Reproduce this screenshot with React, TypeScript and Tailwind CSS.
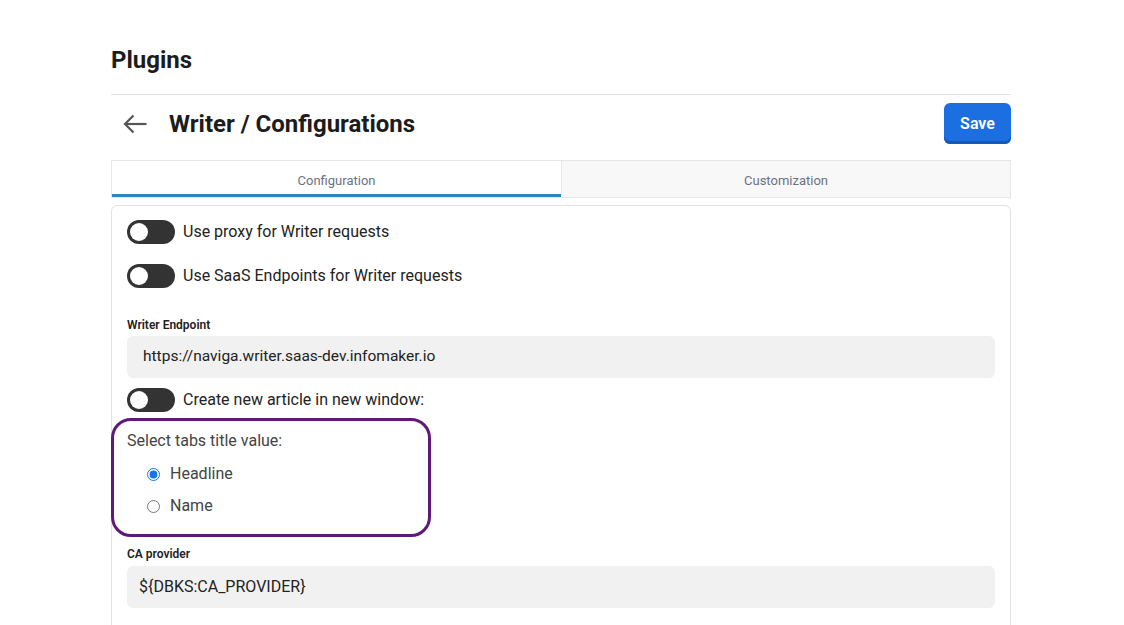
import React, { useState } from 'react';

const Toggle: React.FC<{ label: string; className?: string }> = ({ label, className = '' }) => {
  const [on, setOn] = useState(false);
  return (
    <div className={`flex items-center ${className}`}>
      <button
        type="button"
        onClick={() => setOn(!on)}
        className={`relative w-[48px] h-[24px] rounded-full shrink-0 ${on ? 'bg-[#1a73e8]' : 'bg-[#333333]'}`}
      >
        <span className={`absolute top-[3px] w-[18px] h-[18px] rounded-full bg-white ${on ? 'left-[27px]' : 'left-[3px]'}`}></span>
      </button>
      <span className="ml-[8px] text-[16px] leading-[20px] text-[#222222]">{label}</span>
    </div>
  );
};

const App: React.FC = () => {
  const [tab, setTab] = useState('config');
  const [title, setTitle] = useState('headline');

  return (
    <div className="min-h-screen bg-white" style={{ fontFamily: 'Roboto, "Liberation Sans", sans-serif' }}>
      <div className="ml-[111px] w-[900px] pt-[46px]">
        <h1 className="text-[24px] leading-[28px] font-bold text-[#1c1c1c]">Plugins</h1>

        <div className="mt-[20px] border-t border-[#e3e3e3]"></div>

        {/* Header */}
        <div className="flex items-center justify-between py-[8px]">
          <div className="flex items-center">
            <svg className="ml-[12px] w-[24px] h-[20px] text-[#555555]" viewBox="0 0 24 20" fill="none" stroke="currentColor" strokeWidth="2.2">
              <path d="M23.5 10H2" />
              <path d="M10.5 1.5L2 10L10.5 18.5" />
            </svg>
            <h2 className="ml-[22px] text-[24px] leading-[28px] font-bold text-[#1c1c1c]">Writer / Configurations</h2>
          </div>
          <button className="w-[67px] h-[41px] rounded-[6px] bg-[#1b6fe0] shadow-[inset_0_-3px_0_#1559b8] text-white text-[16px] font-semibold">
            Save
          </button>
        </div>

        {/* Tabs */}
        <div className="mt-[8px] grid grid-cols-2 h-[38px] border border-[#e6e6e6]">
          <button
            onClick={() => setTab('config')}
            className={`pt-[7px] text-[13px] text-[#6b7280] border-b-[3px] ${tab === 'config' ? 'bg-white border-b-[#2a87c0]' : 'bg-[#f8f8f8] border-b-transparent'}`}
          >
            Configuration
          </button>
          <button
            onClick={() => setTab('custom')}
            className={`pt-[7px] text-[13px] text-[#6b7280] border-l border-l-[#e6e6e6] border-b-[3px] ${tab === 'custom' ? 'bg-white border-b-[#2a87c0]' : 'bg-[#f8f8f8] border-b-transparent'}`}
          >
            Customization
          </button>
        </div>

        {/* Panel */}
        <div className="mt-[7px] border border-[#e3e3e3] rounded-[6px] px-[15px] pt-[14px] pb-[40px]">
          <Toggle label="Use proxy for Writer requests" />
          <Toggle label="Use SaaS Endpoints for Writer requests" className="mt-[20px]" />

          <div className="mt-[29px] text-[12px] leading-[16px] font-semibold text-[#222222]">Writer Endpoint</div>
          <div className="mt-[3px] h-[42px] rounded-[6px] bg-[#f1f1f1] px-[16px] flex items-center text-[15.5px] text-[#222222]">
            https://naviga.writer.saas-dev.infomaker.io
          </div>

          <Toggle label="Create new article in new window:" className="mt-[10px]" />

          <div className="mt-[6px] -ml-[16px] w-[320px] border-[3px] border-[#5f1a78] rounded-[20px] px-[13px] pt-[10px] pb-[18px]">
            <div className="text-[16px] leading-[20px] text-[#444444]">Select tabs title value:</div>
            <label className="mt-[13px] ml-[20px] h-[20px] flex items-center cursor-pointer">
              <input
                type="radio"
                name="title"
                checked={title === 'headline'}
                onChange={() => setTitle('headline')}
                className="m-0 w-[13px] h-[13px] accent-[#1a73e8]"
              />
              <span className="ml-[10px] text-[16px] text-[#444444]">Headline</span>
            </label>
            <label className="mt-[12px] ml-[20px] h-[20px] flex items-center cursor-pointer">
              <input
                type="radio"
                name="title"
                checked={title === 'name'}
                onChange={() => setTitle('name')}
                className="m-0 w-[13px] h-[13px] accent-[#1a73e8]"
              />
              <span className="ml-[10px] text-[16px] text-[#444444]">Name</span>
            </label>
          </div>

          <div className="mt-[9px] text-[12px] leading-[16px] font-semibold text-[#222222]">CA provider</div>
          <div className="mt-[4px] h-[42px] rounded-[6px] bg-[#f1f1f1] px-[12px] flex items-center text-[16px] text-[#222222]">
            {'${DBKS:CA_PROVIDER}'}
          </div>
        </div>
      </div>
    </div>
  );
};

export default App;
